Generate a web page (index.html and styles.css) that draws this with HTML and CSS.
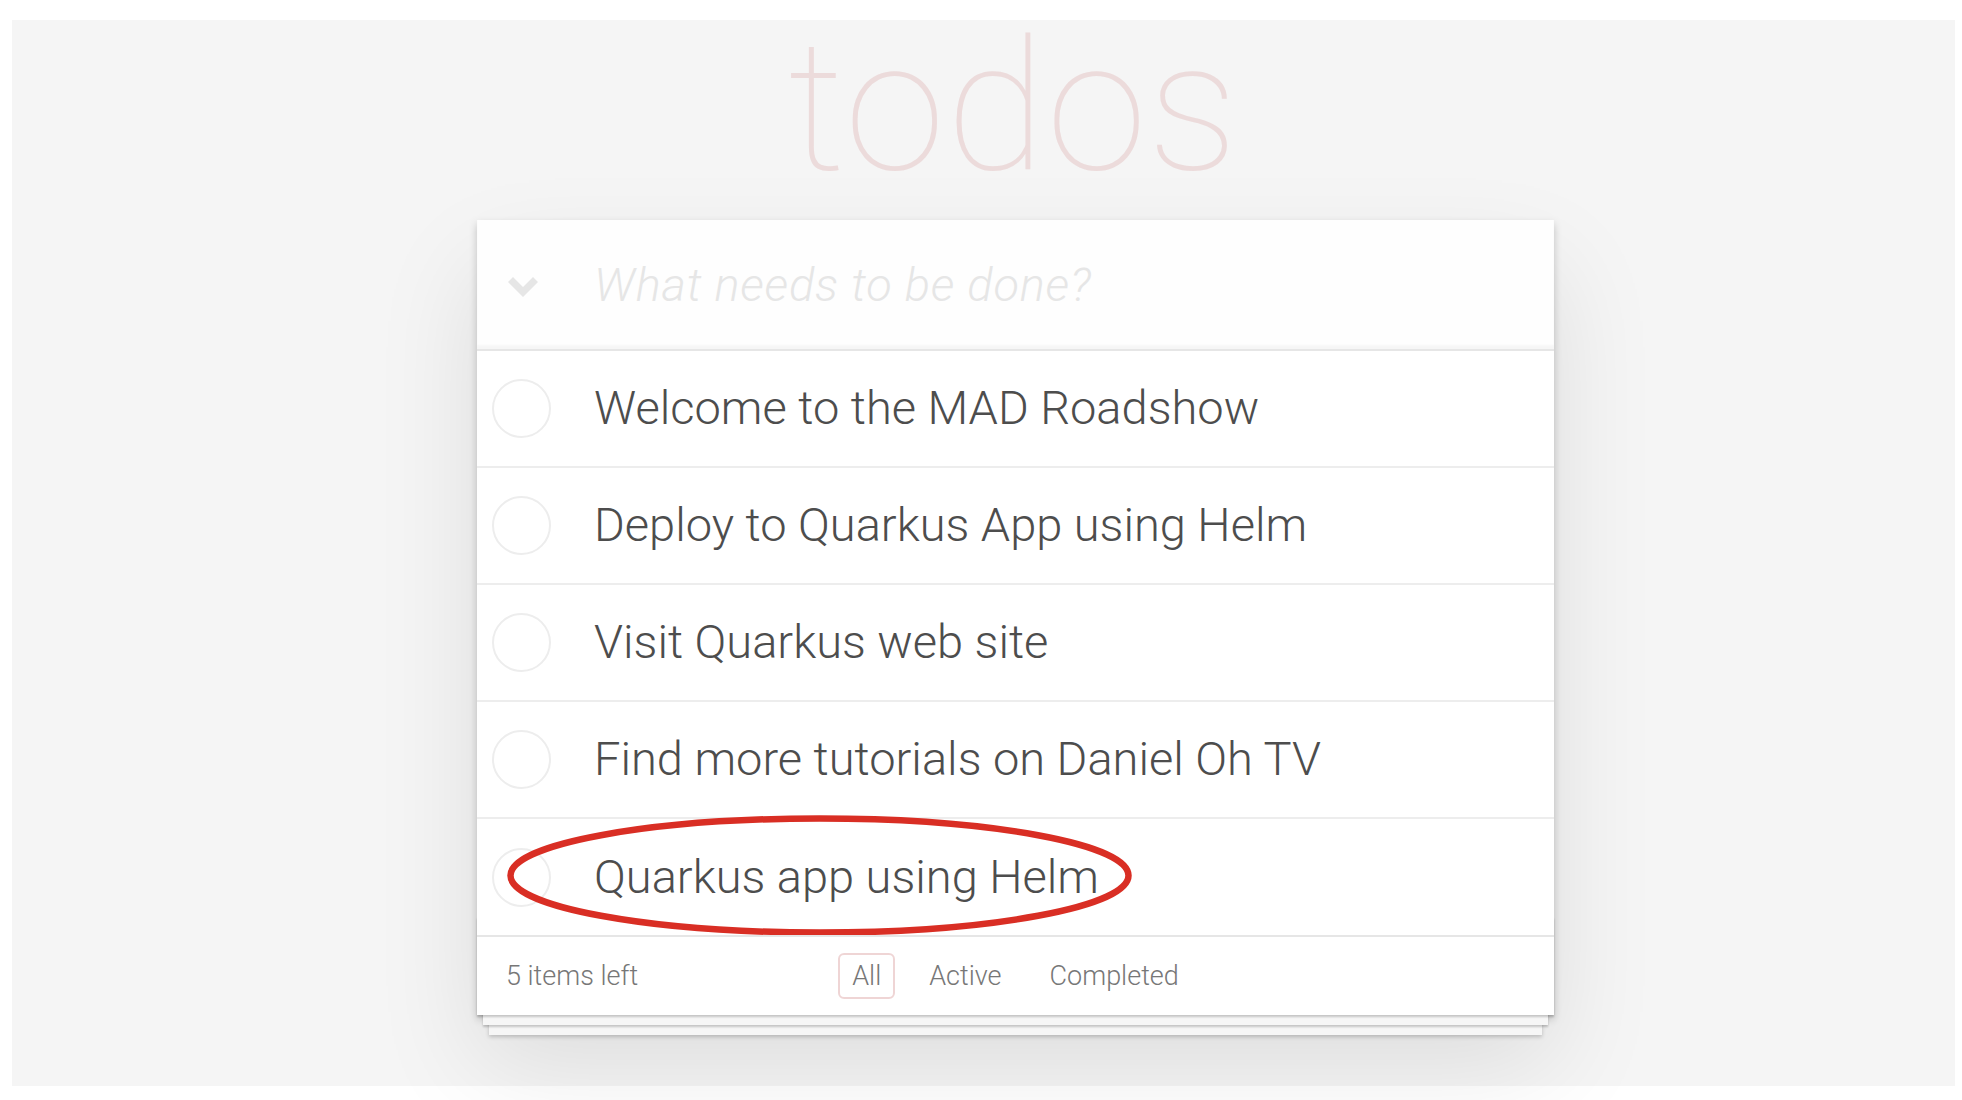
FILE: index.html
```html
<!DOCTYPE html>
<html lang="en">
<head>
<meta charset="utf-8">
<title>todos</title>
<link rel="stylesheet" href="styles.css">
</head>
<body>
<div class="frame">
  <section class="app">
    <h1 class="title">todos</h1>
    <div class="card">
      <header class="new-row">
        <span class="toggle-all">
          <svg width="30" height="20" viewBox="0 0 30 20"><polygon points="0,5 5,0 15,10 25,0 30,5 15,20" fill="#e6e6e6"/></svg>
        </span>
        <span class="placeholder">What needs to be done?</span>
      </header>
      <ul class="list">
        <li class="item"><span class="check"><svg width="59" height="59" viewBox="0 0 59 59"><circle cx="29.5" cy="29.5" r="28.5" fill="none" stroke="#ededed" stroke-width="2"/></svg></span><span class="label">Welcome to the MAD Roadshow</span></li>
        <li class="item"><span class="check"><svg width="59" height="59" viewBox="0 0 59 59"><circle cx="29.5" cy="29.5" r="28.5" fill="none" stroke="#ededed" stroke-width="2"/></svg></span><span class="label">Deploy to Quarkus App using Helm</span></li>
        <li class="item"><span class="check"><svg width="59" height="59" viewBox="0 0 59 59"><circle cx="29.5" cy="29.5" r="28.5" fill="none" stroke="#ededed" stroke-width="2"/></svg></span><span class="label">Visit Quarkus web site</span></li>
        <li class="item"><span class="check"><svg width="59" height="59" viewBox="0 0 59 59"><circle cx="29.5" cy="29.5" r="28.5" fill="none" stroke="#ededed" stroke-width="2"/></svg></span><span class="label">Find more tutorials on Daniel Oh TV</span></li>
        <li class="item marked"><span class="check"><svg width="59" height="59" viewBox="0 0 59 59"><circle cx="29.5" cy="29.5" r="28.5" fill="none" stroke="#ededed" stroke-width="2"/></svg></span><span class="label">Quarkus app using Helm</span>
          <svg class="annot" width="631" height="127" viewBox="0 0 631 127"><ellipse cx="315.5" cy="63.5" rx="309" ry="57" fill="none" stroke="#d92e24" stroke-width="6.5"/></svg>
        </li>
      </ul>
      <footer class="foot">
        <span class="count">5 items left</span>
        <nav class="filters">
          <a class="filter selected">All</a>
          <a class="filter">Active</a>
          <a class="filter">Completed</a>
        </nav>
        <span class="spacer"></span>
      </footer>
    </div>
  </section>
</div>
</body>
</html>
```
FILE: styles.css
```css
html, body {
  margin: 0;
  padding: 0;
  background: #ffffff;
}

body {
  font-family: Roboto, "Liberation Sans", sans-serif;
  font-weight: 300;
  color: #4d4d4d;
}

.frame {
  margin: 20px 7px 14px 12px;
  height: 1066px;
  background: #f5f5f5;
}

.app {
  width: 1077px;
  margin-left: 465px;
}

.title {
  margin: 0;
  height: 200px;
  font-size: 182px;
  line-height: 174px;
  letter-spacing: 1px;
  font-weight: 100;
  text-align: center;
  color: rgb(236, 219, 219);
  padding-right: 4px;
  box-sizing: border-box;
}

.card {
  position: relative;
  background: #fff;
  box-shadow: 0 4px 8px 0 rgba(0, 0, 0, 0.2), 0 49px 98px 0 rgba(0, 0, 0, 0.1);
}

.new-row {
  height: 129px;
  display: flex;
  align-items: center;
  padding-left: 31px;
  background: rgba(0, 0, 0, 0.003);
  box-shadow: inset 0 -4px 2px rgba(0, 0, 0, 0.03);
  border-bottom: 2px solid #e6e6e6;
}

.toggle-all {
  display: flex;
  width: 30px;
  height: 20px;
  margin-top: 4px;
}

.placeholder {
  margin-left: 56px;
  margin-top: 2px;
  font-size: 47px;
  font-style: italic;
  font-weight: 300;
  letter-spacing: 0.8px;
  color: #e6e6e6;
  line-height: 1.2;
}

.list {
  list-style: none;
  margin: 0;
  padding: 0;
}

.item {
  position: relative;
  height: 115px;
  display: flex;
  align-items: center;
  border-bottom: 2px solid #ededed;
}

.item:last-child {
  border-bottom: none;
  height: 116px;
}

.check {
  display: flex;
  width: 59px;
  height: 59px;
  margin-left: 15px;
}

.label {
  margin-left: 43px;
  font-size: 47px;
  line-height: 1.2;
  color: #4d4d4d;
}

.annot {
  position: absolute;
  left: 27px;
  top: -7px;
}

.foot {
  position: relative;
  height: 78px;
  border-top: 2px solid #e6e6e6;
  padding: 0 29px;
  display: grid;
  grid-template-columns: 1fr auto 1fr;
  align-items: center;
  font-size: 27px;
  color: #777;
}

.foot::before {
  content: "";
  position: absolute;
  left: 0;
  right: 0;
  bottom: 0;
  height: 98px;
  overflow: hidden;
  box-shadow: 0 2px 2px rgba(0, 0, 0, 0.2),
    0 16px 0 -6px #f6f6f6,
    0 18px 2px -6px rgba(0, 0, 0, 0.2),
    0 32px 0 -12px #f6f6f6,
    0 34px 4px -12px rgba(0, 0, 0, 0.2);
  pointer-events: none;
}

.count {
  position: relative;
}

.filters {
  position: relative;
  display: flex;
  gap: 20px;
}

.filter {
  display: block;
  height: 42px;
  line-height: 42px;
  padding: 0 12px;
  border: 2px solid transparent;
  border-radius: 6px;
  color: #777;
}

.filter.selected {
  border-color: rgba(175, 47, 47, 0.2);
}
```
